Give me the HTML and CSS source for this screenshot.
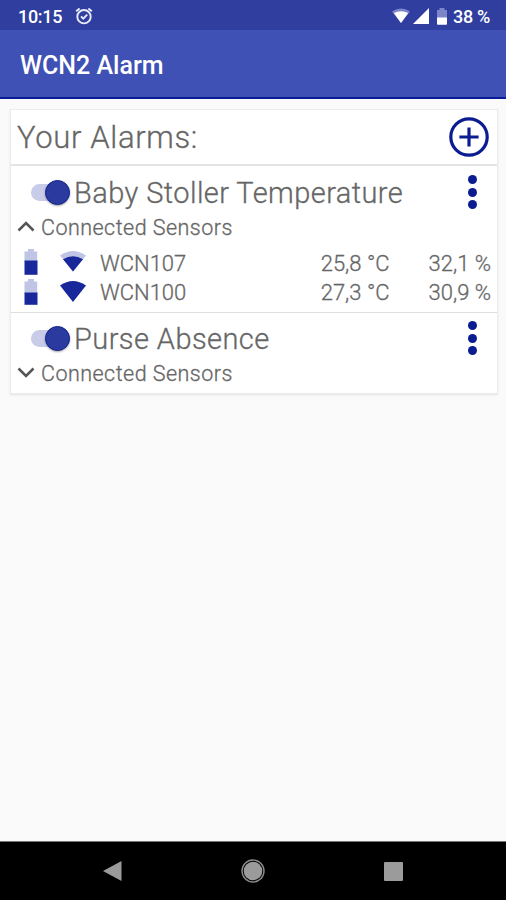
FILE: index.html
```html
<!DOCTYPE html>
<html lang="en">
<head>
    <meta charset="UTF-8">
    <meta name="viewport" content="width=device-width, initial-scale=1.0">
    <title>WCN2 Alarm</title>
    <link rel="stylesheet" href="styles.css">
</head>
<body>
    <div class="status-bar">
        <span class="clock">10:15</span>
        <svg class="alarm-icon" width="18" height="18" viewBox="0 0 18 18" fill="none" stroke="#e8eaf8" stroke-width="1.9">
            <circle cx="9" cy="9.7" r="6.7"/>
            <path d="M1.2 4.2 4.6 1.4M16.8 4.2 13.4 1.4M6 9.3l2.3 2.3L12.2 7.7"/>
        </svg>
        <div class="status-right">
            <svg width="18" height="16" viewBox="0 0 18 16">
                <path d="M0 3.4Q9-2.6 18 3.4L9 15z" fill="#7c86c8"/>
                <path d="M1.800 5Q9 1.600 16.200 5L9 15z" fill="#fff"/>
            </svg>
            <svg class="signal" width="16" height="16" viewBox="0 0 16 16"><path d="M16 0v16H0z" fill="#fff"/></svg>
            <svg class="power" width="10" height="17" viewBox="0 0 10 17">
                <path d="M2.5 0h5v2H10v8H0V2h2.500z" fill="#7c86c8"/>
                <path d="M0 9.500h10V16q0 .8-.8.8H.8Q0 16.800 0 16z" fill="#fff"/>
            </svg>
            <span class="percent">38 %</span>
        </div>
    </div>
    <header class="app-bar"><span class="app-title">WCN2 Alarm</span></header>

    <main class="content">
        <div class="card">
            <div class="card-head">
                <span class="heading">Your Alarms:</span>
                <svg class="add-btn" width="40" height="40" viewBox="0 0 40 40" fill="none" stroke="#0b1c91" stroke-width="3.2">
                    <circle cx="20" cy="20" r="18.200"/>
                    <path d="M20 10.400v19.200M10.400 20h19.200"/>
                </svg>
            </div>

            <section class="alarm open">
                <div class="alarm-row">
                    <div class="switch"><div class="knob"></div></div>
                    <span class="alarm-name">Baby Stoller Temperature</span>
                    <div class="menu"><i></i><i></i><i></i></div>
                </div>
                <div class="toggle-row">
                    <svg width="18" height="12" viewBox="0 0 18 12" fill="none" stroke="#555" stroke-width="2.500"><path d="M1.500 9.500 9 2 16.500 9.500"/></svg>
                    <span class="sub">Connected Sensors</span>
                </div>
                <div class="sensor">
                    <svg class="battery" width="14" height="27" viewBox="0 0 14 27">
                        <path d="M4 0h6v2.500h3.200V13H.5V2.500H4z" fill="#c1c5e5"/>
                        <path d="M.5 11.500h13v14.300H.5z" fill="#18289a"/>
                    </svg>
                    <svg class="wifi" width="26" height="21" viewBox="0 0 26 21">
                        <path d="M0 4.500Q13-4.500 26 4.500L13 20.500z" fill="#c1c5e5"/>
                        <path d="M3 8.200Q13 2.400 23 8.200L13 20.500z" fill="#18289a"/>
                    </svg>
                    <span class="name">WCN107</span>
                    <span class="temp">25,8 °C</span>
                    <span class="hum">32,1 %</span>
                </div>
                <div class="sensor">
                    <svg class="battery" width="14" height="27" viewBox="0 0 14 27">
                        <path d="M4 0h6v2.500h3.200V15H.5V2.500H4z" fill="#c1c5e5"/>
                        <path d="M.5 13.500h13v12.300H.5z" fill="#18289a"/>
                    </svg>
                    <svg class="wifi" width="26" height="21" viewBox="0 0 26 21">
                        <path d="M0 4.500Q13-4.500 26 4.500L13 21z" fill="#18289a"/>
                    </svg>
                    <span class="name">WCN100</span>
                    <span class="temp">27,3 °C</span>
                    <span class="hum">30,9 %</span>
                </div>
            </section>

            <section class="alarm">
                <div class="alarm-row short">
                    <div class="switch"><div class="knob"></div></div>
                    <span class="alarm-name">Purse Absence</span>
                    <div class="menu"><i></i><i></i><i></i></div>
                </div>
                <div class="toggle-row">
                    <svg width="18" height="12" viewBox="0 0 18 12" fill="none" stroke="#555" stroke-width="2.500"><path d="M1.500 1.500 9 9 16.500 1.500"/></svg>
                    <span class="sub">Connected Sensors</span>
                </div>
            </section>
        </div>
    </main>

    <nav class="nav-bar">
        <svg width="20" height="22" viewBox="0 0 20 22"><path d="M19.500 1v20L1 11z" fill="#9b9b9b"/></svg>
        <svg width="24" height="24" viewBox="0 0 24 24">
            <circle cx="12" cy="12" r="11" fill="none" stroke="#8c8c8c" stroke-width="1.400"/>
            <circle cx="12" cy="12" r="9.300" fill="#9b9b9b"/>
        </svg>
        <div class="recent"></div>
    </nav>
</body>
</html>
```
FILE: styles.css
```css
* {
    box-sizing: border-box;
}

body {
    margin: 0;
    height: 900px;
    display: flex;
    flex-direction: column;
    background: #fafafa;
    font-family: Roboto, "Liberation Sans", sans-serif;
    font-weight: 300;
    color: #666;
    white-space: nowrap;
    overflow: hidden;
}

svg {
    display: block;
    flex: none;
}

.status-bar {
    height: 30px;
    padding: 2px 16px 0 18px;
    display: flex;
    align-items: center;
    background: #303f9f;
    color: #fff;
    font-size: 18px;
    font-weight: 500;
}

.clock {
    width: 57px;
    letter-spacing: -0.3px;
}

.percent {
    letter-spacing: -0.3px;
}

.status-right {
    margin-left: auto;
    display: flex;
    align-items: center;
}

.signal {
    margin-left: 3px;
}

.power {
    margin-left: 8px;
    margin-right: 6px;
}

.app-bar {
    height: 69px;
    padding: 4px 0 0 20px;
    display: flex;
    align-items: center;
    background: #3f51b5;
    border-bottom: 2px solid #0a1c9a;
    color: #fff;
    font-size: 25px;
    font-weight: 500;
}

.content {
    flex: 1;
    padding: 10px 8px 10px 10px;
}

.card {
    height: 285px;
    background: #fff;
    border: 1px solid #ececec;
    box-shadow: 0 1px 2px rgba(0,0,0,0.1);
    -webkit-text-stroke: 0.3px #666;
}

.card-head {
    height: 56px;
    padding: 0 8px 0 6px;
    display: flex;
    align-items: center;
    justify-content: space-between;
    border-bottom: 2px solid #e4e4e4;
}

.add-btn {
    margin-top: -1px;
}

.heading {
    margin-top: 1px;
    font-size: 31px;
    letter-spacing: 0.65px;
}

.alarm {
    padding: 0 6px;
}

.open {
    height: 147px;
    border-bottom: 1px solid #dedede;
}

.alarm-row {
    height: 52px;
    display: flex;
    align-items: center;
}

.short {
    height: 50px;
    margin-bottom: 1px;
}

.switch {
    width: 39px;
    height: 17px;
    margin-left: 14px;
    border-radius: 9px;
    background: #c9cce8;
    display: flex;
    align-items: center;
    justify-content: flex-end;
}

.knob {
    width: 25px;
    height: 25px;
    flex: none;
    border-radius: 50%;
    background: #2a3a9e;
    border: 1px solid #12228f;
    box-shadow: 0 1px 2px rgba(0,0,0,0.35);
}

.alarm-name {
    margin: 2px 0 0 4px;
    font-size: 29px;
    letter-spacing: 0.42px;
}

.menu {
    width: 9px;
    height: 34px;
    margin: 0 14px 0 auto;
    display: flex;
    flex-direction: column;
    justify-content: space-between;
}

.menu i {
    width: 9px;
    height: 9px;
    border-radius: 50%;
    background: #0b1c91;
}

.toggle-row {
    height: 18px;
    display: flex;
    align-items: center;
}

.sub {
    margin-left: 6px;
    font-size: 21.5px;
    letter-spacing: 0.47px;
}

.sensor {
    height: 29.5px;
    display: flex;
    align-items: center;
    font-size: 22px;
}

.toggle-row + .sensor {
    margin-top: 12.5px;
}

.battery {
    margin-left: 7px;
    margin-top: -1px;
}

.wifi {
    margin-left: 22px;
    margin-top: -3px;
}

.name {
    width: 221px;
    margin-left: 14px;
}

.temp {
    width: 108px;
}

.nav-bar {
    height: 59px;
    padding: 0 103px 0 102px;
    display: flex;
    align-items: center;
    justify-content: space-between;
    background: #000;
    border-top: 1px solid #777;
}

.recent {
    width: 19px;
    height: 19px;
    border-radius: 1px;
    background: #9b9b9b;
}
```
